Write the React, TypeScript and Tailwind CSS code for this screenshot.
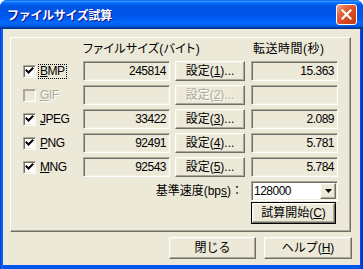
import React from "react";

const U = ({ children }: { children: React.ReactNode }) => (
  <span className="underline decoration-1 underline-offset-[1px]">{children}</span>
);

const sunken =
  "border border-t-[#ACA899] border-l-[#ACA899] border-b-white border-r-white shadow-[inset_1px_1px_0_#716F64,inset_-1px_-1px_0_#F1EFE2]";
const raised =
  "border border-t-white border-l-white border-b-[#716F64] border-r-[#716F64] shadow-[inset_-1px_-1px_0_#ACA899,inset_1px_1px_0_#F1EFE2] bg-[#ECE9D8]";

function Check({ checked, disabled }: { checked?: boolean; disabled?: boolean }) {
  if (disabled) {
    return (
      <div className="w-[13px] h-[13px] shrink-0 border border-t-[#ACA899] border-l-[#ACA899] border-b-white border-r-white shadow-[inset_1px_1px_0_#ACA899,inset_-1px_-1px_0_#F1EFE2] bg-[#ECE9D8]" />
    );
  }
  return (
    <div className={"w-[13px] h-[13px] shrink-0 bg-white flex items-center justify-center " + sunken}>
      {checked && (
        <svg width="9" height="9" viewBox="0 0 9 9">
          <path d="M1.5 3.5 L3.5 5.5 L7.5 1.5" stroke="#000" strokeWidth="2" fill="none" strokeLinecap="square" />
        </svg>
      )}
    </div>
  );
}

function Row({
  acc,
  rest,
  value,
  n,
  time,
  disabled,
  focus,
}: {
  acc: string;
  rest: string;
  value: string;
  n: string;
  time: string;
  disabled?: boolean;
  focus?: boolean;
}) {
  return (
    <div className="flex items-center h-[20px]">
      <div className="w-[60px] h-[20px] flex items-center">
        <Check checked={!disabled} disabled={disabled} />
        <span
          className={
            focus
              ? "ml-[2px] border border-dotted border-black px-[1px] leading-[13px] h-[15px] tracking-[-0.5px]"
              : disabled
              ? "ml-[2px] border border-transparent px-[1px] leading-[13px] h-[15px] tracking-[-0.5px] text-[#ACA899] [text-shadow:1px_1px_0_#ffffff]"
              : "ml-[2px] border border-transparent px-[1px] leading-[13px] h-[15px] tracking-[-0.5px]"
          }
        >
          <U>{acc}</U>
          {rest}
        </span>
      </div>
      <div className={"w-[87px] h-[20px] text-right pr-[3px] leading-[18px] tracking-[-0.5px] " + sunken}>{value}</div>
      <div
        className={
          "ml-[5px] w-[70px] h-[20px] flex items-center justify-center leading-[14px] " +
          raised +
          (disabled ? " text-[#ACA899] [text-shadow:1px_1px_0_#ffffff]" : "")
        }
      >
        設定(<U>{n}</U>)...
      </div>
      <div className={"ml-[6px] w-[87px] h-[20px] text-right pr-[3px] leading-[18px] tracking-[-0.5px] " + sunken}>{time}</div>
    </div>
  );
}

export default function App() {
  return (
    <div className="w-[363px] h-[269px] flex flex-col rounded-t-[7px] overflow-hidden bg-[linear-gradient(to_right,#0831D9_0px,#0055EA_1px,#166AEE_2px,#0055EA_3px,#0055EA_360px,#0831D9_362px)] font-['Liberation_Sans','Noto_Sans_CJK_JP',sans-serif] text-[12px] text-black">
      <div className="h-[29px] shrink-0 flex items-center px-[7px] bg-[linear-gradient(180deg,#0058EE_0%,#3593FF_4%,#288EFF_6%,#127DFF_8%,#036FFC_10%,#0262EE_14%,#0057E5_20%,#0054E3_24%,#0055EB_56%,#005BF5_66%,#026AFE_76%,#0062EF_86%,#0052D6_92%,#0040AB_94%,#003092_100%)]">
        <div className="flex-1 text-white font-bold text-[12px] tracking-[-0.3px] font-['Noto_Sans_CJK_JP',sans-serif] [text-shadow:1px_1px_0_#0F1089] pt-[1px]">
          ファイルサイズ試算
        </div>
        <div className="w-[21px] h-[21px] mr-[-1px] rounded-[3px] border border-white bg-[linear-gradient(135deg,#F4AD95_0%,#E5663F_30%,#D94A22_60%,#C13A14_100%)] flex items-center justify-center">
          <svg width="11" height="11" viewBox="0 0 11 11">
            <path d="M1.5 1.5 L9.5 9.5 M9.5 1.5 L1.5 9.5" stroke="#fff" strokeWidth="2.2" strokeLinecap="square" />
          </svg>
        </div>
      </div>
      <div className="flex-1 flex flex-col ml-[3px] mr-[3px] mb-[4px] bg-[#ECE9D8]">
        <div className="mt-[8px] ml-[7px] mr-[9px] h-[195px] border border-t-white border-l-white border-b-[#716F64] border-r-[#716F64] shadow-[inset_-1px_-1px_0_#ACA899] pl-[12px] pt-[3px] flex flex-col">
          <div className="flex h-[16px] items-center">
            <div className="w-[60px]" />
            <div className="w-[162px] [font-feature-settings:'palt'] tracking-[0.3px]">ファイルサイズ(バイト)</div>
            <div className="ml-[8px] tracking-[0.5px]">転送時間(秒)</div>
          </div>
          <div className="mt-[4px] flex flex-col gap-[4px]">
            <Row acc="B" rest="MP" value="245814" n="1" time="15.363" focus />
            <Row acc="G" rest="IF" value="" n="2" time="" disabled />
            <Row acc="J" rest="PEG" value="33422" n="3" time="2.089" />
            <Row acc="P" rest="NG" value="92491" n="4" time="5.781" />
            <Row acc="M" rest="NG" value="92543" n="5" time="5.784" />
          </div>
          <div className="mt-[4px] flex items-center h-[20px]">
            <div className="w-[228px] text-right pr-[8px]">
              基準速度(bp<U>s</U>)：
            </div>
            <div className={"w-[87px] h-[20px] bg-white flex items-center " + sunken}>
              <div className="flex-1 pl-[2px] leading-[16px] tracking-[-0.5px]">128000</div>
              <div className={"w-[16px] h-[16px] mr-[1px] flex items-center justify-center " + raised}>
                <svg width="7" height="4" viewBox="0 0 7 4">
                  <path d="M0 0 H7 L3.5 4 Z" fill="#000" />
                </svg>
              </div>
            </div>
          </div>
          <div className="mt-[1px] ml-[228px] w-[85px] h-[22px] border border-black">
            <div className={"w-full h-full flex items-center justify-center " + raised}>
              試算開始(<U>C</U>)
            </div>
          </div>
        </div>
        <div className="mt-[5px] mr-[8px] flex justify-end gap-[8px]">
          <div className={"w-[87px] h-[22px] flex items-center justify-center " + raised}>閉じる</div>
          <div className={"w-[88px] h-[22px] flex items-center justify-center " + raised}>
            ヘルプ(<U>H</U>)
          </div>
        </div>
      </div>
    </div>
  );
}
